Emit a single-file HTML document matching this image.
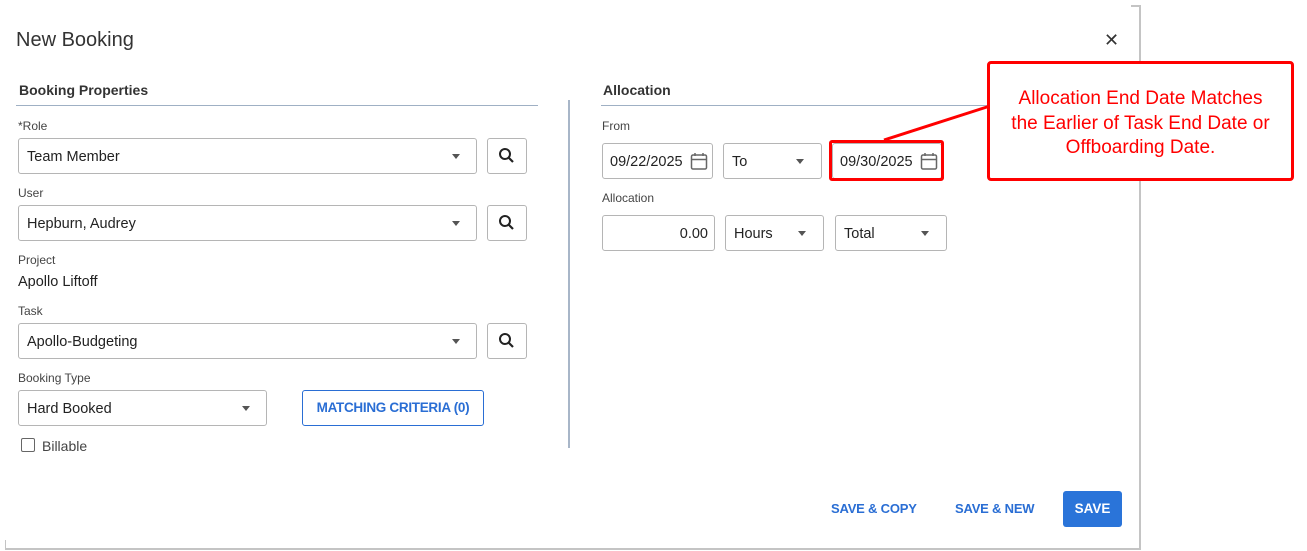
<!DOCTYPE html>
<html><head><style>
body{margin:0;width:1307px;height:551px;background:#fff;font-family:"Liberation Sans",sans-serif;color:#222;position:relative;overflow:hidden}
.a{position:absolute}
.lbl{font-size:12px;color:#444}
.box{position:absolute;border:1px solid #b5b5b5;border-radius:3px;background:#fff;box-sizing:border-box;font-size:14.5px;color:#222;line-height:36px;padding-left:8px}
.caret{position:absolute;top:15px;width:0;height:0;border-left:4px solid transparent;border-right:4px solid transparent;border-top:5px solid #555}
.sb{position:absolute;border:1px solid #b5b5b5;border-radius:3px;width:40px;height:36px;box-sizing:border-box}
.btn{font-size:13px;font-weight:bold;color:#2a6ed4;letter-spacing:-0.2px}
</style></head><body>
<div class="a" style="left:1139px;top:5px;width:2px;height:545px;background:#c4c4c4"></div>
<div class="a" style="left:1131px;top:5px;width:9px;height:2px;background:#c4c4c4"></div>
<div class="a" style="left:5px;top:548px;width:1135px;height:2px;background:#c4c4c4"></div>
<div class="a" style="left:5px;top:540px;width:1px;height:9px;background:#c4c4c4"></div>

<div class="a" style="left:16px;top:29px;font-size:20px;color:#333">New Booking</div>
<div class="a" style="left:1104px;top:30px;font-size:18px;color:#333">✕</div>

<div class="a" style="left:19px;top:82px;font-size:14px;font-weight:bold;color:#333">Booking Properties</div>
<div class="a" style="left:16px;top:105px;width:522px;height:1px;background:#9fb0c4"></div>
<div class="a" style="left:568px;top:100px;width:2px;height:348px;background:#a8b6c8"></div>

<div class="a lbl" style="left:18px;top:119px">*Role</div>
<div class="box" style="left:18px;top:138px;width:459px;height:36px">Team Member<span class="caret" style="left:433px"></span></div>
<div class="sb" style="left:487px;top:138px"><svg width="38" height="34"><circle cx="17" cy="15" r="5" fill="none" stroke="#222" stroke-width="2"/><line x1="21" y1="19" x2="25" y2="23" stroke="#222" stroke-width="2.2"/></svg></div>
<div class="a lbl" style="left:18px;top:186px">User</div>
<div class="box" style="left:18px;top:205px;width:459px;height:36px">Hepburn, Audrey<span class="caret" style="left:433px"></span></div>
<div class="sb" style="left:487px;top:205px"><svg width="38" height="34"><circle cx="17" cy="15" r="5" fill="none" stroke="#222" stroke-width="2"/><line x1="21" y1="19" x2="25" y2="23" stroke="#222" stroke-width="2.2"/></svg></div>
<div class="a lbl" style="left:18px;top:253px">Project</div>
<div class="a" style="left:18px;top:274px;font-size:14.5px">Apollo Liftoff</div>
<div class="a lbl" style="left:18px;top:304px">Task</div>
<div class="box" style="left:18px;top:323px;width:459px;height:36px">Apollo-Budgeting<span class="caret" style="left:433px"></span></div>
<div class="sb" style="left:487px;top:323px"><svg width="38" height="34"><circle cx="17" cy="15" r="5" fill="none" stroke="#222" stroke-width="2"/><line x1="21" y1="19" x2="25" y2="23" stroke="#222" stroke-width="2.2"/></svg></div>
<div class="a lbl" style="left:18px;top:371px">Booking Type</div>
<div class="box" style="left:18px;top:390px;width:249px;height:36px">Hard Booked<span class="caret" style="left:223px"></span></div>
<div class="a" style="left:302px;top:390px;width:182px;height:36px;border:1px solid #2a6ed4;border-radius:3px;box-sizing:border-box;text-align:center;line-height:34px;font-size:13.5px;color:#2a6ed4;font-weight:bold;letter-spacing:-0.3px">MATCHING CRITERIA (0)</div>
<div class="a" style="left:21px;top:438px;width:12px;height:12px;border:1px solid #666;border-radius:2px"></div>
<div class="a" style="left:42px;top:438px;font-size:14px;color:#444">Billable</div>

<div class="a" style="left:603px;top:82px;font-size:14px;font-weight:bold;color:#333">Allocation</div>
<div class="a" style="left:601px;top:105px;width:388px;height:1px;background:#9fb0c4"></div>
<div class="a lbl" style="left:602px;top:119px">From</div>
<div class="box" style="left:602px;top:143px;width:111px;height:36px;padding-left:7px">09/22/2025<svg class="a" style="left:87px;top:8px" width="18" height="19"><rect x="1.5" y="3" width="15" height="14" rx="1.5" fill="none" stroke="#666" stroke-width="1.5"/><line x1="1.5" y1="7.5" x2="16.5" y2="7.5" stroke="#666" stroke-width="1.5"/><line x1="5" y1="1" x2="5" y2="4" stroke="#666" stroke-width="1.5"/><line x1="13" y1="1" x2="13" y2="4" stroke="#666" stroke-width="1.5"/></svg></div>
<div class="box" style="left:723px;top:143px;width:99px;height:36px">To<span class="caret" style="left:72px"></span></div>
<div class="box" style="left:832px;top:143px;width:110px;height:36px;padding-left:7px">09/30/2025<svg class="a" style="left:87px;top:8px" width="18" height="19"><rect x="1.5" y="3" width="15" height="14" rx="1.5" fill="none" stroke="#666" stroke-width="1.5"/><line x1="1.5" y1="7.5" x2="16.5" y2="7.5" stroke="#666" stroke-width="1.5"/><line x1="5" y1="1" x2="5" y2="4" stroke="#666" stroke-width="1.5"/><line x1="13" y1="1" x2="13" y2="4" stroke="#666" stroke-width="1.5"/></svg></div>
<div class="a lbl" style="left:602px;top:191px">Allocation</div>
<div class="box" style="left:602px;top:215px;width:113px;height:36px;text-align:right;padding-right:6px">0.00</div>
<div class="box" style="left:725px;top:215px;width:99px;height:36px">Hours<span class="caret" style="left:72px"></span></div>
<div class="box" style="left:835px;top:215px;width:112px;height:36px">Total<span class="caret" style="left:85px"></span></div>

<div class="a" style="left:829px;top:140px;width:109px;height:35px;border:3px solid #f00;border-radius:3px"></div>
<svg class="a" style="left:0;top:0" width="1307" height="551"><line x1="884" y1="140" x2="990" y2="106" stroke="#f00" stroke-width="3"/></svg>
<div class="a" style="left:987px;top:61px;width:301px;height:114px;border:3px solid #f00;border-radius:4px;background:#fff;color:#f00;font-size:19px;line-height:24.5px;text-align:center;white-space:nowrap"><div style="padding-top:23px">Allocation End Date Matches<br>the Earlier of Task End Date or<br>Offboarding Date.</div></div>

<div class="a btn" style="left:831px;top:501px">SAVE &amp; COPY</div>
<div class="a btn" style="left:955px;top:501px">SAVE &amp; NEW</div>
<div class="a" style="left:1063px;top:491px;width:59px;height:36px;background:#2a74d9;border-radius:3px;color:#fff;font-size:13.5px;font-weight:bold;text-align:center;line-height:36px">SAVE</div>
</body></html>
